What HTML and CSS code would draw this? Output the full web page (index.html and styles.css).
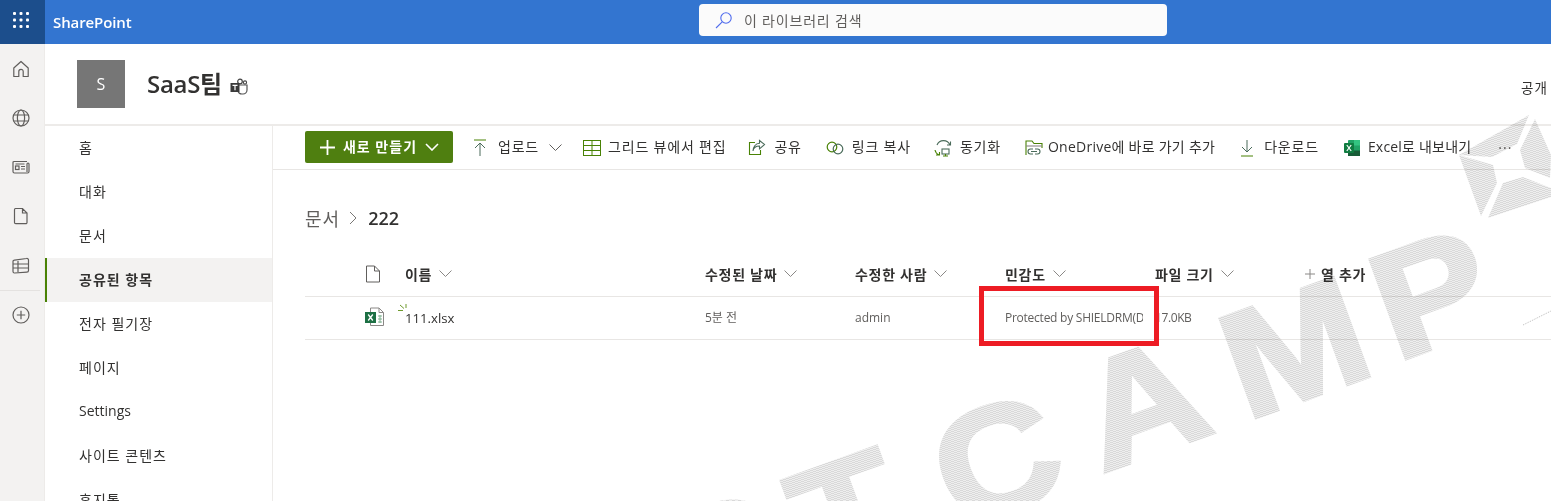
FILE: index.html
```html
<!DOCTYPE html>
<html lang="ko">
<head>
<meta charset="utf-8">
<title>SharePoint</title>
<link rel="stylesheet" href="styles.css">
</head>
<body>
<div class="page">
  <header class="suite">
    <div class="waffle">
      <svg width="16" height="16" viewBox="0 0 16 16" fill="#fff"><rect x="0" y="0" width="3" height="3" rx="1"/><rect x="6.500" y="0" width="3" height="3" rx="1"/><rect x="13" y="0" width="3" height="3" rx="1"/><rect x="0" y="6.500" width="3" height="3" rx="1"/><rect x="6.500" y="6.500" width="3" height="3" rx="1"/><rect x="13" y="6.500" width="3" height="3" rx="1"/><rect x="0" y="13" width="3" height="3" rx="1"/><rect x="6.500" y="13" width="3" height="3" rx="1"/><rect x="13" y="13" width="3" height="3" rx="1"/></svg>
    </div>
    <div class="brand">SharePoint</div>
    <div class="search">
      <svg class="search-icon" width="18" height="18" viewBox="0 0 18 18" fill="none" stroke="#4f6bed" stroke-width="1.100"><circle cx="11" cy="7" r="5.200"/><path d="M7.200 10.800 1 17"/></svg>
      <span>이 라이브러리 검색</span>
    </div>
  </header>
  <div class="main">
    <nav class="rail">
      <svg class="rail-icon" width="18" height="18" viewBox="0 0 18 18" fill="none" stroke="#605e5c" stroke-width="1.200"><path d="M9 1.500 1.800 8v8.500h5v-5a2.200 2.200 0 0 1 4.400 0v5h5V8z" stroke-linejoin="round"/></svg>
      <svg class="rail-icon" width="18" height="18" viewBox="0 0 18 18" fill="none" stroke="#605e5c" stroke-width="1.200"><circle cx="9" cy="9" r="8"/><ellipse cx="9" cy="9" rx="3.600" ry="8"/><path d="M1.600 6h14.800M1.600 12h14.800"/></svg>
      <svg class="rail-icon" width="18" height="18" viewBox="0 0 18 18" fill="none" stroke="#605e5c" stroke-width="1.200"><path d="M15 3.500H2a1 1 0 0 0-1 1v9a1.500 1.500 0 0 0 1.500 1.500h13a1.500 1.500 0 0 0 1.500-1.500V6a1 1 0 0 0-2 0v8"/><rect x="3.500" y="8" width="3.500" height="3.500"/><path d="M3.500 6h9M9 8.500h4M9 11h4"/></svg>
      <svg class="rail-icon" width="18" height="18" viewBox="0 0 18 18" fill="none" stroke="#605e5c" stroke-width="1.200"><path d="M3.500 1.500h7l4.500 4.500v9.500a1.200 1.200 0 0 1-1.200 1.200H3.700a1.200 1.200 0 0 1-1.200-1.200V2.700a1.200 1.200 0 0 1 1-1.200zM10.500 1.500V6H15"/></svg>
      <svg class="rail-icon rail-list" width="18" height="18" viewBox="0 0 18 18" fill="none" stroke="#605e5c" stroke-width="1.200"><path d="M2.500 3.200 14.500 1.500a1.600 1.600 0 0 1 2 1.500v10.500a1.600 1.600 0 0 1-1.600 1.600l-12.400.9A1.500 1.500 0 0 1 1 14.500v-10a1.400 1.400 0 0 1 1.500-1.300zM1 7h15.500M1 11h15.500M6 4v11"/></svg>
      <div class="rail-line"></div>
      <svg class="rail-icon" width="18" height="18" viewBox="0 0 18 18" fill="none" stroke="#605e5c" stroke-width="1.200"><circle cx="9" cy="9" r="8"/><path d="M9 4.800v8.400M4.800 9h8.400"/></svg>
    </nav>
    <div class="site">
      <div class="site-head">
        <div class="site-logo">S</div>
        <h1 class="site-title">SaaS팀</h1>
        <svg class="teams" width="18" height="18" viewBox="0 0 18 18" fill="none"><circle cx="10" cy="3.500" r="2.300" stroke="#444" stroke-width="1.200"/><circle cx="15" cy="4.500" r="1.600" stroke="#444" stroke-width="1.100"/><path d="M7 7h10v5a4 4 0 0 1-4 4h-1a4 4 0 0 1-4-3" stroke="#555" stroke-width="1.200"/><rect x="0.500" y="5" width="9" height="9" fill="#3a3a3a"/><path d="M2.500 7.300h5M5 7.300v5" stroke="#fff" stroke-width="1.200"/></svg>
        <span class="public">공개 그룹</span>
      </div>
      <div class="site-body">
        <ul class="nav">
          <li class="nav-item">홈</li>
          <li class="nav-item">대화</li>
          <li class="nav-item">문서</li>
          <li class="nav-item nav-active">공유된 항목</li>
          <li class="nav-item">전자 필기장</li>
          <li class="nav-item">페이지</li>
          <li class="nav-item nav-latin">Settings</li>
          <li class="nav-item">사이트 콘텐츠</li>
          <li class="nav-item">휴지통</li>
        </ul>
        <section class="content">
          <div class="cmdbar">
            <button class="new-btn">
              <svg width="15" height="15" viewBox="0 0 15 15" stroke="#fff" stroke-width="1.800"><path d="M7.500 0v15M0 7.500h15"/></svg>
              <span>새로 만들기</span>
              <svg width="14" height="8" viewBox="0 0 14 8" fill="none" stroke="#fff" stroke-width="1.600"><path d="m1 1 6 6 6-6"/></svg>
            </button>
            <div class="cmd cmd-upload">
              <svg width="16" height="18" viewBox="0 0 16 18" fill="none" stroke="#498205" stroke-width="1"><path d="M2 1h12"/><path d="M8 17V4M3 9l5-5 5 5" stroke="#4a6b5a"/></svg>
              <span>업로드</span>
              <svg class="chev" width="13" height="7" viewBox="0 0 13 7" fill="none" stroke="#605e5c"><path d="m.5.500 6 6 6-6"/></svg>
            </div>
            <div class="cmd cmd-grid">
              <svg width="18" height="18" viewBox="0 0 18 18" fill="none" stroke="#498205" stroke-width="1"><rect x=".500" y="1.500" width="17" height="15"/><path d="M.500 6.500h17M.500 11.500h17M9 1.500v15"/></svg>
              <span>그리드 뷰에서 편집</span>
            </div>
            <div class="cmd cmd-share">
              <svg width="18" height="18" viewBox="0 0 18 18" fill="none" stroke="#498205" stroke-width="1.100"><path d="M7 3.500H1.500v12h11V11"/><path d="M5 12c.5-3 3-5 6.500-5v2.800L16.500 5.500 11.500 1.500v2.800C7.500 4.500 5 8 5 12z" stroke="#4a6b5a"/></svg>
              <span>공유</span>
            </div>
            <div class="cmd cmd-link">
              <svg width="18" height="18" viewBox="0 0 18 18" fill="none" stroke="#498205" stroke-width="1.200"><circle cx="6" cy="8" r="4.800"/><circle cx="12" cy="10" r="4.800" stroke="#4a6b5a"/></svg>
              <span>링크 복사</span>
            </div>
            <div class="cmd cmd-sync">
              <svg width="19" height="19" viewBox="0 0 19 19" fill="none" stroke="#498205" stroke-width="1.100"><path d="M3 7a7 7 0 0 1 13 0M13 7h3.500V3.500" stroke="#4a6b5a"/><path d="M1 12a7 7 0 0 0 4 5M2 17h3.500v-3"/><rect x="8" y="11" width="7" height="5" stroke="#4a6b5a"/><path d="M11.500 16v2M9 18h5"/></svg>
              <span>동기화</span>
            </div>
            <div class="cmd cmd-onedrive">
              <svg width="18" height="18" viewBox="0 0 18 18" fill="none" stroke="#498205" stroke-width="1.100"><path d="M1 16V2h6l2 2.500h8V9"/><path d="M1 7h16" stroke="#8a8886"/><path d="M8 10H5.500a2.500 2.500 0 0 0 0 5H8M10 10h2.500a2.500 2.500 0 0 1 0 5H10M6 12.500h6" stroke="#4a6b5a"/></svg>
              <span>OneDrive에 바로 가기 추가</span>
            </div>
            <div class="cmd cmd-down">
              <svg width="14" height="18" viewBox="0 0 14 18" fill="none" stroke="#4a6b5a" stroke-width="1"><path d="M7 1v12M2 8l5 5 5-5"/><path d="M1 17h12" stroke="#498205"/></svg>
              <span>다운로드</span>
            </div>
            <div class="cmd cmd-excel">
              <svg width="16" height="18" viewBox="0 0 16 18"><rect x="4" y="1" width="12" height="16" rx="1" fill="#21a366"/><rect x="10" y="1" width="6" height="5.500" fill="#33c481"/><rect x="4" y="11.500" width="12" height="5.500" fill="#185c37"/><rect x="0" y="4" width="10" height="10" rx="1" fill="#107c41"/><path d="m2.800 6 4.400 6M7.200 6l-4.400 6" stroke="#fff" stroke-width="1.200"/></svg>
              <span>Excel로 내보내기</span>
            </div>
            <div class="cmd-more">···</div>
          </div>
          <div class="crumbs">
            <span class="crumb">문서</span>
            <svg width="8" height="14" viewBox="0 0 8 14" fill="none" stroke="#797775"><path d="m1 1 6 6-6 6"/></svg>
            <strong class="crumb-now">222</strong>
          </div>
          <div class="table">
            <div class="row row-head">
              <div class="cell-icon"><svg width="16" height="18" viewBox="0 0 16 18" fill="none" stroke="#605e5c" stroke-width="1"><path d="M1.500 1h8l5 5v11h-13zM9.500 1v5h5"/></svg></div>
              <div class="th">이름<svg class="chev" width="13" height="7" viewBox="0 0 13 7" fill="none" stroke="#8a8886"><path d="m.5.500 6 6 6-6"/></svg></div>
              <div class="th">수정된 날짜<svg class="chev" width="13" height="7" viewBox="0 0 13 7" fill="none" stroke="#8a8886"><path d="m.5.500 6 6 6-6"/></svg></div>
              <div class="th">수정한 사람<svg class="chev" width="13" height="7" viewBox="0 0 13 7" fill="none" stroke="#8a8886"><path d="m.5.500 6 6 6-6"/></svg></div>
              <div class="th">민감도<svg class="chev" width="13" height="7" viewBox="0 0 13 7" fill="none" stroke="#8a8886"><path d="m.5.500 6 6 6-6"/></svg></div>
              <div class="th">파일 크기<svg class="chev" width="13" height="7" viewBox="0 0 13 7" fill="none" stroke="#8a8886"><path d="m.5.500 6 6 6-6"/></svg></div>
              <div class="th th-add"><svg width="10" height="10" viewBox="0 0 10 10" stroke="#8a8886"><path d="M5 0v10M0 5h10"/></svg>열 추가</div>
            </div>
            <div class="row row-file">
              <div class="cell-icon"><svg width="20" height="20" viewBox="0 0 20 20" fill="none"><path d="M5.500 5V1h8.500l4.500 4.500V18.500H5.500V15" stroke="#8a8886"/><path d="M14 1v4.500h4.500" stroke="#8a8886"/><path d="M13 9h4M13 12h4M13 15h4M15 8v8" stroke="#7fb08f"/><rect x="0" y="5" width="11" height="11" fill="#1d7044"/><path d="m3.200 7.500 4.600 6M7.800 7.500l-4.600 6" stroke="#fff" stroke-width="1.300"/></svg></div>
              <div class="td-name"><svg class="new-mark" width="9" height="9" viewBox="0 0 9 9" fill="none" stroke="#6f9a2d"><path d="M8 0v4M2 1l4 3.500M0 6.500h5"/></svg>111.xlsx</div>
              <div class="td">5분 전</div>
              <div class="td">admin</div>
              <div class="td td-label">Protected by SHIELDRM(DRM)</div>
              <div class="td td-size">17.0KB</div>
              <div class="td"></div>
            </div>
          </div>
        </section>
      </div>
    </div>
  </div>
</div>
<svg class="watermark" width="1551" height="501" viewBox="0 0 1551 501">
  <defs>
    <pattern id="hatch" width="6" height="2" patternUnits="userSpaceOnUse">
      <rect x="0" y="0" width="6" height="2" fill="#eeeeee" shape-rendering="crispEdges"/>
      <rect x="0" y="0" width="3" height="1" fill="#d9d9d9" shape-rendering="crispEdges"/>
      <rect x="3" y="1" width="3" height="1" fill="#d9d9d9" shape-rendering="crispEdges"/>
    </pattern>
    <mask id="wm-mask" maskUnits="userSpaceOnUse" x="0" y="0" width="1551" height="501">
      <g fill="#fff">
        <polygon points="1459,155 1529,115 1517,144 1492,157"/>
        <polygon points="1535,119 1551,155 1550,178 1525,168 1520,150"/>
        <polygon points="1488,218 1503,183 1523,177 1551,188 1551,197"/>
        <polygon points="1459,155 1493,165 1497,183 1481,216"/>
      </g>
      <g class="wm-letters" fill="#fff" stroke="#fff">
        <text class="wm-letter" transform="translate(1396 362) rotate(-20) scale(1.12 1)">P</text>
        <text class="wm-letter" transform="translate(1246 421) rotate(-20) scale(1.12 1)">M</text>
        <text class="wm-letter" transform="translate(1102 473) rotate(-20) scale(1.12 1)">A</text>
        <text class="wm-letter" transform="translate(957 530) rotate(-20) scale(1.12 1)">C</text>
        <text class="wm-letter" transform="translate(816 580) rotate(-20) scale(1.12 1)">T</text>
        <text class="wm-letter" transform="translate(681 629) rotate(-20) scale(1.12 1)">O</text>
      </g>
    </mask>
  </defs>
  <rect width="1551" height="501" fill="url(#hatch)" mask="url(#wm-mask)"/>
  <path d="M1523 325 1551 311" stroke="#bbb" stroke-dasharray="1 1" fill="none"/>
</svg>
<div class="redbox"></div>
</body>
</html>
```
FILE: styles.css
```css
* { box-sizing: border-box; }
html, body { margin: 0; height: 100%; overflow: hidden; background: #fff; }
body { font-family: "Open Sans", "Noto Sans CJK KR", sans-serif; font-size: 14px; color: #323130; }
.page { width: 1551px; height: 501px; display: flex; flex-direction: column; overflow: hidden; }

.suite { height: 44px; flex: none; background: #3375d0; display: flex; align-items: center; position: relative; }
.waffle { width: 45px; height: 44px; background: #1c4e8c; display: flex; align-items: center; justify-content: center; padding: 0 3px 4px 0; }
.brand { margin-left: 8px; color: #fff; font-size: 15px; font-weight: 600; letter-spacing: -.1px; }
.search { position: absolute; left: 699px; top: 4px; width: 468px; height: 32px; background: #fbfbfb; border-radius: 4px; display: flex; align-items: center; padding-left: 16px; gap: 11px; color: #605e5c; letter-spacing: .8px; }

.main { flex: 1; display: flex; min-height: 0; }
.rail { width: 45px; flex: none; background: #f3f2f1; border-right: 1px solid #edebe9; display: flex; flex-direction: column; align-items: center; padding-top: 16px; padding-right: 2px; gap: 31px; }
.rail-icon { flex: none; display: block; }
.rail-list { margin-top: 1px; }
.rail-line { width: 40px; height: 1px; background: #e4e2e0; margin: -16px 0; flex: none; align-self: flex-start; }

.site { flex: 1; min-width: 0; display: flex; flex-direction: column; }
.site-head { height: 82px; flex: none; border-bottom: 2px solid #edebe9; display: flex; align-items: center; padding-left: 32px; position: relative; }
.site-logo { width: 48px; height: 48px; background: #767676; color: #fff; font-size: 16px; display: flex; align-items: center; justify-content: center; }
.site-title { margin: 0 0 0 22px; font-size: 24px; font-weight: 600; line-height: 32px; color: #323130; letter-spacing: -.3px; }
.teams { margin: 6px 0 0 8px; }
.public { position: absolute; left: 1476px; top: 33px; font-size: 13.500px; white-space: nowrap; color: #323130; letter-spacing: 1px; }

.site-body { flex: 1; display: flex; min-height: 0; }
.nav { width: 228px; flex: none; margin: 0; padding: 0; list-style: none; border-right: 1px solid #edebe9; }
.nav-item { height: 44px; display: flex; align-items: center; padding: 0 0 3px 34px; color: #323130; letter-spacing: 1px; }
.nav-latin { letter-spacing: 0; }
.nav-active { background: #f3f2f1; border-left: 2px solid #498205; padding-left: 32px; font-weight: 600; }

.content { flex: 1; min-width: 0; }
.cmdbar { height: 44px; border-bottom: 1px solid #e8e6e4; display: flex; align-items: center; padding-left: 32px; color: #323130; white-space: nowrap; letter-spacing: .8px; }
.new-btn { width: 148px; height: 32px; margin-top: -1px; border: 0; border-radius: 2px; background: #4f7f10; color: #fff; font: inherit; font-weight: 600; font-size: 14px; letter-spacing: 1px; display: flex; align-items: center; padding: 0 14px 0 15px; gap: 8px; }
.new-btn span { padding-bottom: 2px; }
.cmd { display: flex; align-items: center; gap: 8px; flex: none; }
.cmd span { padding-bottom: 3px; }
.cmd-upload { margin-left: 19px; gap: 10px; }
.cmd-grid { margin-left: 21px; gap: 7px; }
.cmd-share { margin-left: 22px; }
.cmd-link { margin-left: 24px; }
.cmd-sync { margin-left: 23px; gap: 7px; }
.cmd-onedrive { margin-left: 24px; gap: 5px; letter-spacing: .25px; }
.cmd-down { margin-left: 25px; gap: 10px; }
.cmd-excel { margin-left: 25px; gap: 8px; letter-spacing: .2px; }
.cmd-more { margin-left: 27px; color: #605e5c; font-size: 14px; letter-spacing: 1px; }

.crumbs { display: flex; align-items: center; height: 28px; margin: 34px 0 0 32px; gap: 9px; }
.crumb { font-size: 18px; color: #605e5c; letter-spacing: 1px; }
.crumb-now { font-size: 18px; font-weight: 600; color: #323130; margin-left: 2px; }

.table { margin: 23px 0 0 32px; }
.row { display: grid; grid-template-columns: 100px 300px 150px 150px 150px 150px 1fr; border-bottom: 1px solid #e8e6e4; align-items: center; }
.row-head { height: 42px; padding-bottom: 4px; }
.row-file { height: 43px; padding-bottom: 2px; }
.cell-icon { padding-left: 60px; display: flex; }
.th { font-weight: 600; display: flex; align-items: center; gap: 7px; white-space: nowrap; letter-spacing: .7px; }
.th-add { gap: 6px; }
.td { font-size: 12px; color: #605e5c; overflow: hidden; white-space: nowrap; }
.td-label { margin-right: 12px; letter-spacing: -.25px; }
.td-size { letter-spacing: -.4px; }
.td-name { font-size: 13.200px; padding-top: 2px; position: relative; color: #323130; }
.new-mark { position: absolute; left: -7px; top: -3px; }

.watermark { position: absolute; left: 0; top: 0; pointer-events: none; mix-blend-mode: multiply; }
.wm-letters { stroke-width: 4px; }
.wm-letter { font-family: "Liberation Sans", sans-serif; font-weight: 700; font-size: 152px; }
.redbox { position: absolute; left: 979px; top: 286px; width: 180px; height: 60px; border: 5px solid #ed1c24; pointer-events: none; }
```
